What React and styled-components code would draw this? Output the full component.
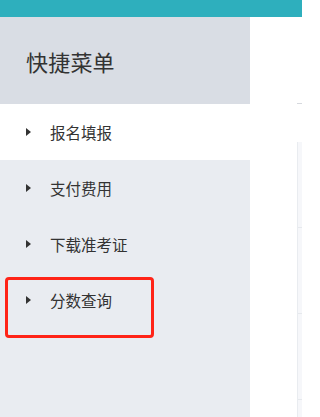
import React from "react";
import styled, { createGlobalStyle } from "styled-components";

const Global = createGlobalStyle`
  html, body { margin: 0; padding: 0; background: #ffffff; overflow: hidden; }
  body { font-family: "Noto Sans CJK SC", "Noto Sans", sans-serif; }
`;

const Page = styled.div`
  width: 302px;
  height: 417px;
  display: flex;
  flex-direction: column;
  background: #ffffff;
`;

const TopBar = styled.div`
  height: 17px;
  background: #2eafbd;
  flex-shrink: 0;
`;

const Body = styled.div`
  flex: 1;
  display: flex;
  min-height: 0;
`;

const Sidebar = styled.nav`
  width: 250px;
  flex-shrink: 0;
  background: #e9ecf1;
  display: flex;
  flex-direction: column;
`;

const SideHeader = styled.div`
  height: 87px;
  background: #d9dde4;
  display: flex;
  align-items: center;
  padding-left: 26px;
  font-size: 22px;
  color: #333333;
  letter-spacing: 0.2px;
`;

const MenuItem = styled.div`
  position: relative;
  height: 56px;
  display: flex;
  align-items: center;
  padding-left: 26px;
  background: ${(p) => (p.$active ? "#ffffff" : "transparent")};
  color: #333333;
  font-size: 15.5px;
`;

const Arrow = styled.span`
  width: 0;
  height: 0;
  border-top: 4px solid transparent;
  border-bottom: 4px solid transparent;
  border-left: 5px solid #333333;
  margin-right: 19px;
`;

const Highlight = styled.div`
  position: absolute;
  left: 5px;
  top: 5px;
  width: 149px;
  height: 61px;
  box-sizing: border-box;
  border: 3px solid #ff2418;
  border-radius: 4px;
  pointer-events: none;
`;

const Content = styled.main`
  flex: 1;
  padding-left: 47px;
  display: flex;
  flex-direction: column;
`;

const TopRule = styled.div`
  margin-top: 86px;
  height: 1px;
  background: #d6d9de;
`;

const Panel = styled.div`
  margin-top: 38px;
  flex: 1;
  background: #f6f7fa;
  border-left: 1px solid #e9ecf0;
  display: flex;
  flex-direction: column;
`;

const PanelRow = styled.div`
  height: 85px;
  border-bottom: 1px solid #e6e9ed;
  flex-shrink: 0;
`;

const items = ["报名填报", "支付费用", "下载准考证", "分数查询"];

export default function App() {
  return (
    <Page>
      <Global />
      <TopBar />
      <Body>
        <Sidebar>
          <SideHeader>快捷菜单</SideHeader>
          {items.map((t, i) => (
            <MenuItem key={t} $active={i === 0}>
              <Arrow />
              {t}
              {i === 3 && <Highlight />}
            </MenuItem>
          ))}
        </Sidebar>
        <Content>
          <TopRule />
          <Panel>
            <PanelRow />
            <PanelRow />
            <PanelRow />
          </Panel>
        </Content>
      </Body>
    </Page>
  );
}
